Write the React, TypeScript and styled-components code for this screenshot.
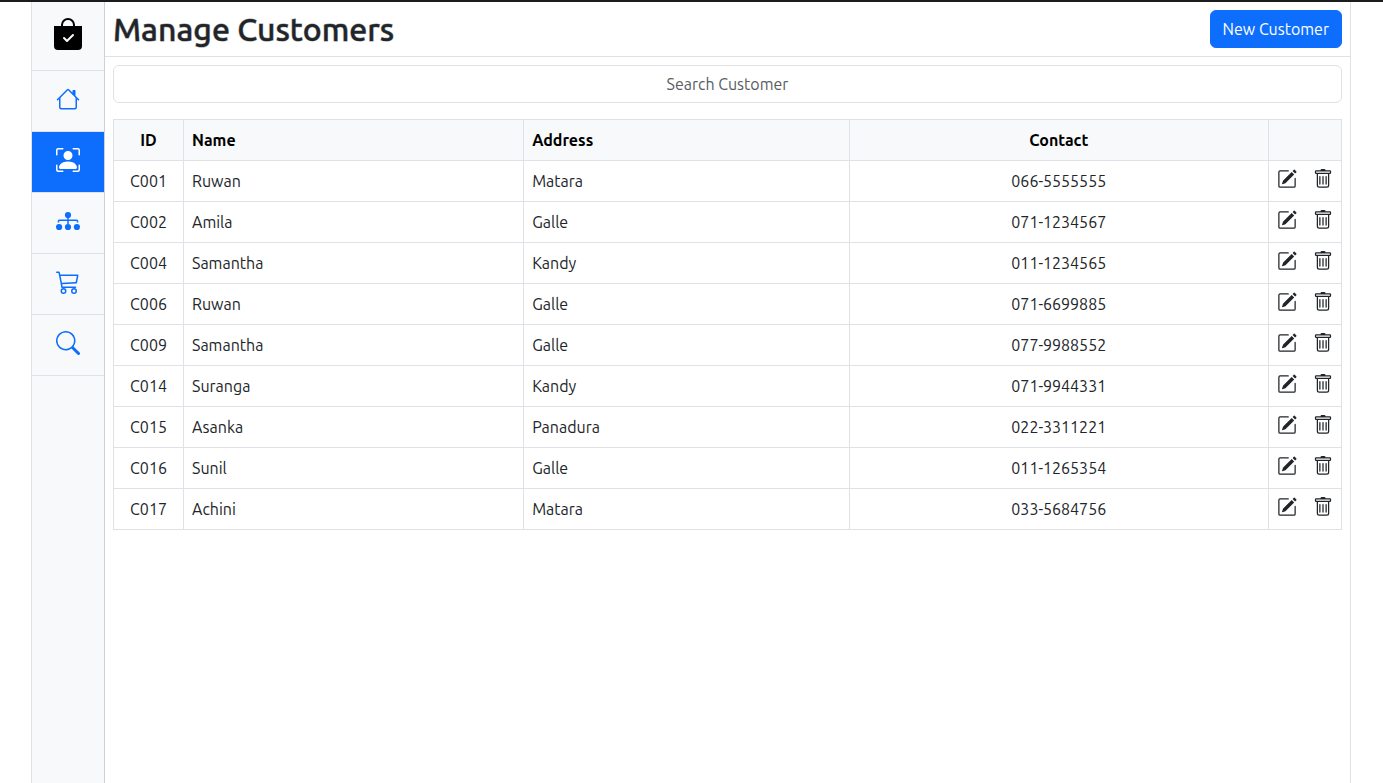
import React, { useState } from "react";
import styled, { createGlobalStyle } from "styled-components";
import {
  BsBagCheckFill,
  BsCart3,
  BsHouse,
  BsPencilSquare,
  BsPersonBoundingBox,
  BsSearch,
  BsTrash,
} from "react-icons/bs";

const colors = {
  primary: "#0d6efd",
  text: "#212529",
  border: "#dee2e6",
  divider: "#ced1d5",
  panel: "#f8f9fa",
};

const GlobalStyle = createGlobalStyle`
  *, *::before, *::after { box-sizing: border-box; }
  body {
    margin: 0;
    background: #fff;
    color: ${colors.text};
    font-family: Ubuntu, "Noto Sans", "Liberation Sans", sans-serif;
    font-size: 16px;
    line-height: 24px;
  }
`;

const Page = styled.div`
  min-height: 100vh;
  display: flex;
  flex-direction: column;
  padding: 0 32px 0 31px;
  border-top: 2px solid #1c1b1d;
`;

const Container = styled.div`
  flex: 1;
  display: flex;
  width: 100%;
  max-width: 1320px;
  margin: 0 auto;
  border: solid ${colors.border};
  border-width: 0 1px;
`;

const Sidebar = styled.nav`
  flex: none;
  width: 73px;
  background: ${colors.panel};
  border-right: 1px solid ${colors.divider};
`;

const Brand = styled.a`
  display: flex;
  justify-content: center;
  padding: 16px 0 20px;
  color: #000;
  border-bottom: 1px solid ${colors.border};
`;

const NavLink = styled.a<{ $active?: boolean }>`
  display: flex;
  justify-content: center;
  padding: 16px 0 20px;
  color: ${({ $active }) => ($active ? "#fff" : colors.primary)};
  background: ${({ $active }) => ($active ? colors.primary : "transparent")};
  background-clip: padding-box;
  border-bottom: 1px solid ${colors.border};
`;

const Main = styled.main`
  flex: 1;
  min-width: 0;
`;

const Header = styled.header`
  display: flex;
  align-items: center;
  justify-content: space-between;
  padding: 8px;
  border-bottom: 1px solid ${colors.border};
`;

const Title = styled.h1`
  margin: 0;
  font-size: 32px;
  line-height: 38px;
  font-weight: 500;
  -webkit-text-stroke: 1px rgba(33, 37, 41, 0.5);
`;

const PrimaryButton = styled.button`
  padding: 6px 12px;
  border: 1px solid ${colors.primary};
  border-radius: 6px;
  background: ${colors.primary};
  color: #fff;
  font: inherit;
  cursor: pointer;
`;

const Content = styled.div`
  padding: 8px;
`;

const SearchInput = styled.input`
  display: block;
  width: 100%;
  padding: 6px 12px;
  border: 1px solid ${colors.border};
  border-radius: 6px;
  background: #fff;
  color: ${colors.text};
  font: inherit;
  text-align: center;

  &::placeholder {
    color: #595c5f;
    opacity: 1;
  }
`;

const Table = styled.table`
  width: 100%;
  margin-top: 16px;
  table-layout: fixed;
  border-collapse: collapse;
`;

const Col = styled.col<{ $width?: string }>`
  width: ${({ $width }) => $width ?? "auto"};
`;

const HeadCell = styled.th<{ $center?: boolean }>`
  padding: 8px;
  border: 1px solid ${colors.border};
  background: ${colors.panel};
  color: #000;
  font-weight: 700;
  text-align: ${({ $center }) => ($center ? "center" : "left")};
`;

const Cell = styled.td<{ $center?: boolean }>`
  padding: 8px;
  border: 1px solid ${colors.border};
  vertical-align: top;
  text-align: ${({ $center }) => ($center ? "center" : "left")};
`;

const Actions = styled.div`
  display: flex;
  gap: 16px;
`;

const IconButton = styled.button`
  display: flex;
  padding: 0;
  border: 0;
  background: none;
  color: inherit;
  cursor: pointer;
`;

const ItemsIcon = ({ size }: { size: number }) => (
  <svg width={size} height={size} viewBox="0 0 24 24" fill="currentColor" aria-hidden="true">
    <circle cx="12" cy="6" r="3.1" />
    <circle cx="3.1" cy="18" r="3.1" />
    <circle cx="12" cy="18" r="3.1" />
    <circle cx="20.9" cy="18" r="3.1" />
    <path d="M2.5 13.5V12q0-.8.8-.8h17.4q.8 0 .8.8v1.5M12 8v7" fill="none" stroke="currentColor" strokeWidth="1.5" />
  </svg>
);

const links = [
  { label: "Home", icon: BsHouse },
  { label: "Customers", icon: BsPersonBoundingBox, active: true },
  { label: "Items", icon: ItemsIcon },
  { label: "Orders", icon: BsCart3 },
  { label: "Search", icon: BsSearch },
];

const customers = [
  { id: "C001", name: "Ruwan", address: "Matara", contact: "066-5555555" },
  { id: "C002", name: "Amila", address: "Galle", contact: "071-1234567" },
  { id: "C004", name: "Samantha", address: "Kandy", contact: "011-1234565" },
  { id: "C006", name: "Ruwan", address: "Galle", contact: "071-6699885" },
  { id: "C009", name: "Samantha", address: "Galle", contact: "077-9988552" },
  { id: "C014", name: "Suranga", address: "Kandy", contact: "071-9944331" },
  { id: "C015", name: "Asanka", address: "Panadura", contact: "022-3311221" },
  { id: "C016", name: "Sunil", address: "Galle", contact: "011-1265354" },
  { id: "C017", name: "Achini", address: "Matara", contact: "033-5684756" },
];

export default function App() {
  const [query, setQuery] = useState("");
  const needle = query.trim().toLowerCase();
  const rows = customers.filter((c) => Object.values(c).some((v) => v.toLowerCase().includes(needle)));

  return (
    <Page>
      <GlobalStyle />
      <Container>
        <Sidebar>
          <Brand href="#" aria-label="Store">
            <BsBagCheckFill size={32} />
          </Brand>
          {links.map(({ label, icon: Icon, active }) => (
            <NavLink key={label} href="#" aria-label={label} $active={active}>
              <Icon size={24} />
            </NavLink>
          ))}
        </Sidebar>
        <Main>
          <Header>
            <Title>Manage Customers</Title>
            <PrimaryButton type="button">New Customer</PrimaryButton>
          </Header>
          <Content>
            <SearchInput
              type="text"
              aria-label="Search Customer"
              placeholder="Search Customer"
              value={query}
              onChange={(e) => setQuery(e.target.value)}
            />
            <Table>
              <colgroup>
                <Col $width="70px" />
                <Col $width="27.7%" />
                <Col $width="26.5%" />
                <Col />
                <Col $width="73px" />
              </colgroup>
              <thead>
                <tr>
                  <HeadCell $center>ID</HeadCell>
                  <HeadCell>Name</HeadCell>
                  <HeadCell>Address</HeadCell>
                  <HeadCell $center>Contact</HeadCell>
                  <HeadCell aria-label="Actions" />
                </tr>
              </thead>
              <tbody>
                {rows.map((c) => (
                  <tr key={c.id}>
                    <Cell $center>{c.id}</Cell>
                    <Cell>{c.name}</Cell>
                    <Cell>{c.address}</Cell>
                    <Cell $center>{c.contact}</Cell>
                    <Cell>
                      <Actions>
                        <IconButton type="button" aria-label={`Edit ${c.id}`}>
                          <BsPencilSquare size={20} />
                        </IconButton>
                        <IconButton type="button" aria-label={`Delete ${c.id}`}>
                          <BsTrash size={20} />
                        </IconButton>
                      </Actions>
                    </Cell>
                  </tr>
                ))}
              </tbody>
            </Table>
          </Content>
        </Main>
      </Container>
    </Page>
  );
}
